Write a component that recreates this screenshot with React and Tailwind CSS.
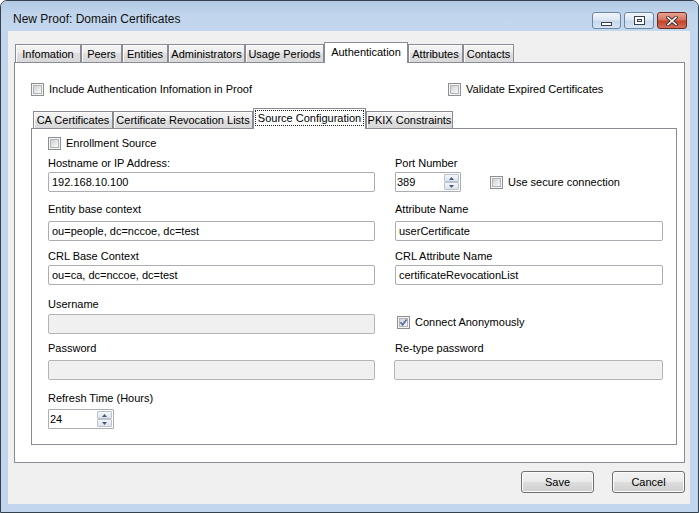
import React from 'react'

function CheckBox({ checked }) {
  return (
    <span className="relative inline-block w-[13px] h-[13px] shrink-0 border border-[#8e8f8f] bg-[#f4f4f4]">
      <span className="absolute inset-[1px] border border-[#b1b5ba] bg-[linear-gradient(135deg,#cfd2d6,#f8f8f8)]" />
      {checked && (
        <svg className="absolute inset-0" width="11" height="11" viewBox="0 0 11 11">
          <path d="M2.5 5.3 L4.6 7.8 L8.6 2.4" fill="none" stroke="#5a6fa5" strokeWidth="1.7" />
        </svg>
      )}
    </span>
  )
}

function CheckRow({ checked, label, className = '' }) {
  return (
    <div className={`flex items-center h-[14px] leading-[14px] ${className}`}>
      <CheckBox checked={checked} />
      <span className="ml-[5px] whitespace-nowrap">{label}</span>
    </div>
  )
}

function Label({ children }) {
  return <div className="h-[14px] leading-[14px] whitespace-nowrap">{children}</div>
}

function TextBox({ value, disabled, className = '' }) {
  return (
    <div
      className={`h-[20px] rounded-[2px] border pl-[3px] leading-[18px] whitespace-nowrap overflow-hidden ${
        disabled ? 'bg-[#f0f0f0] border-[#b4b4b4]' : 'bg-white border-[#abadb3]'
      } ${className}`}
    >
      {value}
    </div>
  )
}

function SpinBtn({ up }) {
  return (
    <div className="flex-1 flex items-center justify-center border border-[#b9c3cf] rounded-[1px] bg-[linear-gradient(#f5f7fa,#dde3ea)]">
      <svg width="5" height="3" viewBox="0 0 5 3">
        {up ? <path d="M0 3 L2.5 0 L5 3 Z" fill="#44597a" /> : <path d="M0 0 L2.5 3 L5 0 Z" fill="#44597a" />}
      </svg>
    </div>
  )
}

function Spinner({ value, className = '' }) {
  return (
    <div className={`flex h-[20px] border border-[#abadb3] rounded-[1px] bg-white ${className}`}>
      <div className="flex-1 pl-[1px] leading-[18px]">{value}</div>
      <div className="flex flex-col w-[16px] py-[1px] pr-[1px]">
        <SpinBtn up />
        <SpinBtn />
      </div>
    </div>
  )
}

function Tab({ label, w, selected, focus, small }) {
  if (selected) {
    return (
      <div
        className={`relative z-10 ${w} h-[21px] -mb-[1px] bg-white border border-b-0 border-[#898c95] text-center pt-[1px] whitespace-nowrap`}
      >
        {focus ? (
          <span className="inline-block border border-dotted border-[#222] px-[2px] leading-[14px] h-[16px] whitespace-nowrap">{label}</span>
        ) : (
          <span className="inline-block pt-[1px] leading-[14px]">{label}</span>
        )}
      </div>
    )
  }
  return (
    <div
      className={`${w} ${small ? 'h-[17px] pt-[1px]' : 'h-[18px] pt-[2px]'} border border-b-0 border-[#898c95] bg-[linear-gradient(#f4f4f4,#ececec_50%,#dfdfdf_50%,#d8d8d8)] text-center leading-[14px] whitespace-nowrap shadow-[inset_1px_1px_0_#fcfcfc]`}
    >
      {label}
    </div>
  )
}

function WinButton({ children }) {
  return (
    <div className="w-[73px] h-[22px] rounded-[3px] border border-[#707070] bg-[linear-gradient(#f2f2f2,#ebebeb_50%,#dddddd_50%,#cfcfcf)] shadow-[inset_0_0_0_1px_#fbfbfb] text-center leading-[20px]">
      {children}
    </div>
  )
}

function Caption({ kind, w }) {
  if (kind === 'close') {
    return (
      <div className={`${w} h-[17px] rounded-[3px] border border-[#6b2a1f] bg-[linear-gradient(#e8a493,#d6745d_45%,#c2432a_55%,#d4705a)] flex items-center justify-center`}>
        <svg width="12" height="10" viewBox="0 0 12 10">
          <path d="M2 1.5 L10 8.5 M10 1.5 L2 8.5" stroke="#3a2a2a" strokeWidth="3.4" strokeLinecap="square" />
          <path d="M2 1.5 L10 8.5 M10 1.5 L2 8.5" stroke="#ffffff" strokeWidth="1.6" strokeLinecap="square" />
        </svg>
      </div>
    )
  }
  return (
    <div className={`${w} h-[17px] rounded-[3px] border border-[#7086a6] bg-[linear-gradient(#f0f5fb,#dce7f4_45%,#c8d9ec_55%,#d6e4f2)] flex items-center justify-center`}>
      {kind === 'min' ? (
        <div className="mt-[6px] w-[11px] h-[4px] border border-[#3a4250] bg-white" />
      ) : (
        <div className="w-[11px] h-[9px] border border-[#3a4250] bg-white flex items-center justify-center">
          <div className="w-[5px] h-[3px] border border-[#3a4250] bg-[#dbe6f3]" />
        </div>
      )}
    </div>
  )
}

export default function App() {
  return (
    <div className="w-[699px] h-[513px] font-['Liberation_Sans',Arial,sans-serif] text-[11px] text-black bg-white">
      <div className="w-[699px] h-[513px] flex flex-col border border-[#33404e] rounded-t-[7px] bg-[#c2d6ed] overflow-hidden">
        {/* Title bar */}
        <div className="h-[30px] flex items-start justify-between pl-[12px] pr-[11px] bg-[linear-gradient(#b0c8e2,#c0d5ec_40%,#c3d7ee)]">
          <div className="pt-[11px] text-[12px] leading-[15px] text-[#111]">New Proof: Domain Certificates</div>
          <div className="flex gap-[3px] pt-[11px]">
            <Caption kind="min" w="w-[29px]" />
            <Caption kind="max" w="w-[30px]" />
            <Caption kind="close" w="w-[30px]" />
          </div>
        </div>

        {/* Client area */}
        <div className="ml-[7px] mr-[8px] h-[473px] bg-[#f0f0f0] pt-[11px] pl-[6px] pr-[5px]">
          {/* Outer tab control */}
          <div className="flex items-end h-[20px] pl-[1px]">
            <Tab label="Infomation" w="w-[66px]" />
            <Tab label="Peers" w="w-[41px]" />
            <Tab label="Entities" w="w-[46px]" />
            <Tab label="Administrators" w="w-[77px]" />
            <Tab label="Usage Periods" w="w-[79px]" />
            <Tab label="Authentication" w="w-[84px]" selected />
            <Tab label="Attributes" w="w-[55px]" />
            <Tab label="Contacts" w="w-[51px]" />
          </div>
          <div className="h-[401px] border border-[#898c95] bg-white pt-[19px] pl-[16px]">
            <div className="flex">
              <CheckRow label="Include Authentication Infomation in Proof" className="w-[417px]" />
              <CheckRow label="Validate Expired Certificates" />
            </div>

            {/* Inner tab control */}
            <div className="mt-[12px] w-[646px]">
              <div className="flex items-end h-[20px] pl-[2px]">
                <Tab label="CA Certificates" w="w-[80px]" small />
                <Tab label="Certificate Revocation Lists" w="w-[140px]" small />
                <Tab label="Source Configuration" w="w-[113px]" selected focus small />
                <Tab label="PKIX Constraints" w="w-[87px]" small />
              </div>
              <div className="h-[317px] border border-[#898c95] bg-white pt-[7px] pl-[16px]">
                <CheckRow label="Enrollment Source" />

                <div className="flex gap-[20px] mt-[6px]">
                  <div className="w-[327px]">
                    <Label>Hostname or IP Address:</Label>
                    <TextBox value="192.168.10.100" className="mt-[2px]" />
                  </div>
                  <div className="w-[268px]">
                    <Label>Port Number</Label>
                    <div className="flex items-center mt-[2px]">
                      <Spinner value="389" className="w-[66px]" />
                      <CheckRow label="Use secure connection" className="ml-[29px]" />
                    </div>
                  </div>
                </div>

                <div className="flex gap-[20px] mt-[10px]">
                  <div className="w-[327px]">
                    <Label>Entity base context</Label>
                    <TextBox value="ou=people, dc=nccoe, dc=test" className="mt-[5px]" />
                  </div>
                  <div className="w-[268px]">
                    <Label>Attribute Name</Label>
                    <TextBox value="userCertificate" className="mt-[5px]" />
                  </div>
                </div>

                <div className="flex gap-[20px] mt-[8px]">
                  <div className="w-[327px]">
                    <Label>CRL Base Context</Label>
                    <TextBox value="ou=ca, dc=nccoe, dc=test" className="mt-[2px]" />
                  </div>
                  <div className="w-[268px]">
                    <Label>CRL Attribute Name</Label>
                    <TextBox value="certificateRevocationList" className="mt-[2px]" />
                  </div>
                </div>

                <div className="flex gap-[20px] mt-[12px]">
                  <div className="w-[327px]">
                    <Label>Username</Label>
                    <TextBox disabled className="mt-[3px]" />
                  </div>
                  <div className="w-[268px] pt-[18px] pl-[2px]">
                    <CheckRow checked label="Connect Anonymously" />
                  </div>
                </div>

                <div className="flex gap-[19px] mt-[7px]">
                  <div className="w-[327px]">
                    <Label>Password</Label>
                    <TextBox disabled className="mt-[5px]" />
                  </div>
                  <div className="w-[269px]">
                    <div className="pl-[1px]">
                      <Label>Re-type password</Label>
                    </div>
                    <TextBox disabled className="mt-[5px]" />
                  </div>
                </div>

                <div className="mt-[11px]">
                  <Label>Refresh Time (Hours)</Label>
                  <Spinner value="24" className="mt-[4px] w-[66px]" />
                </div>
              </div>
            </div>
          </div>

          {/* Dialog buttons */}
          <div className="flex justify-end gap-[18px] mt-[8px]">
            <WinButton>Save</WinButton>
            <WinButton>Cancel</WinButton>
          </div>
        </div>
      </div>
    </div>
  )
}
